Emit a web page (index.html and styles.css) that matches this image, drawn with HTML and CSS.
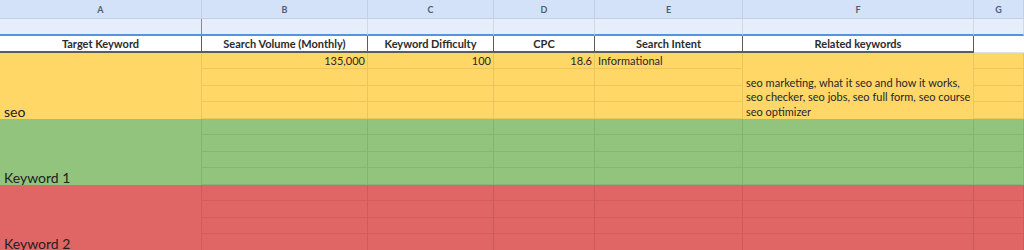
FILE: index.html
```html
<!DOCTYPE html>
<html>
<head>
<meta charset="utf-8">
<link rel="stylesheet" href="styles.css">
</head>
<body>
<div class="sheet">
  <div class="col">A</div><div class="col">B</div><div class="col">C</div><div class="col">D</div><div class="col">E</div><div class="col">F</div><div class="col">G</div>

  <div class="sel sel-a"></div><div class="sel sel-b"></div><div class="sel"></div><div class="sel"></div><div class="sel"></div><div class="sel"></div><div class="sel"></div>

  <div class="hd">Target Keyword</div><div class="hd">Search Volume (Monthly)</div><div class="hd">Keyword Difficulty</div><div class="hd">CPC</div><div class="hd">Search Intent</div><div class="hd">Related keywords</div><div class="hd hd-g"></div>

  <div class="c y kw">seo</div><div class="c y num">135,000</div><div class="c y num">100</div><div class="c y num">18.6</div><div class="c y txt">Informational</div>
  <div class="c y rel"><span>seo marketing, what it seo and how it works,</span><span>seo checker, seo jobs, seo full form, seo course</span><span>seo optimizer</span></div><div class="c y"></div>
  <div class="c y"></div><div class="c y"></div><div class="c y"></div><div class="c y"></div><div class="c y"></div>
  <div class="c y"></div><div class="c y"></div><div class="c y"></div><div class="c y"></div><div class="c y"></div>
  <div class="c y"></div><div class="c y"></div><div class="c y"></div><div class="c y"></div><div class="c y"></div>

  <div class="c g kw">Keyword 1</div><div class="c g"></div><div class="c g"></div><div class="c g"></div><div class="c g"></div><div class="c g"></div><div class="c g"></div>
  <div class="c g"></div><div class="c g"></div><div class="c g"></div><div class="c g"></div><div class="c g"></div><div class="c g"></div>
  <div class="c g"></div><div class="c g"></div><div class="c g"></div><div class="c g"></div><div class="c g"></div><div class="c g"></div>
  <div class="c g"></div><div class="c g"></div><div class="c g"></div><div class="c g"></div><div class="c g"></div><div class="c g"></div>

  <div class="c r kw">Keyword 2</div><div class="c r"></div><div class="c r"></div><div class="c r"></div><div class="c r"></div><div class="c r"></div><div class="c r"></div>
  <div class="c r"></div><div class="c r"></div><div class="c r"></div><div class="c r"></div><div class="c r"></div><div class="c r"></div>
  <div class="c r"></div><div class="c r"></div><div class="c r"></div><div class="c r"></div><div class="c r"></div><div class="c r"></div>
  <div class="c r"></div><div class="c r"></div><div class="c r"></div><div class="c r"></div><div class="c r"></div><div class="c r"></div>
</div>
</body>
</html>
```

FILE: styles.css
```css
html, body {
  margin: 0;
  padding: 0;
  background: #ffffff;
  overflow: hidden;
}

.sheet {
  display: grid;
  grid-template-columns: 202px 166px 126px 101px 148px 231px 50px;
  grid-template-rows: 19px 17px 17px 16px 17px 16px 17px 16px 17px 16px 17px 16px 17px 16px 17px;
  width: 1024px;
  font-family: Lato, "Liberation Sans", sans-serif;
  color: #262626;
}

.sheet > div {
  box-sizing: border-box;
  min-width: 0;
  overflow: hidden;
  white-space: nowrap;
}

.col {
  background: #d3e2f8;
  border-right: 1px solid #c3cfe2;
  border-bottom: 1px solid #c3cfe2;
  font-size: 9px;
  font-weight: 700;
  color: #4f5d73;
  display: flex;
  align-items: center;
  justify-content: center;
}

.sel {
  background: #e6eefb;
  border-right: 1px solid #cfd9ea;
  border-bottom: 2px solid #5a8fe6;
}

.sel-a {
  border-right: 1px solid #5a8fe6;
}

.hd {
  background: #ffffff;
  border-right: 1px solid #5c5c5c;
  border-bottom: 2px solid #5c5c5c;
  font-size: 11px;
  font-weight: 700;
  color: #2b2b2b;
  display: flex;
  align-items: center;
  justify-content: center;
}

.hd-g {
  border-right: none;
  border-bottom: 1px solid #e2e2e2;
}

.c {
  border-right: 1px solid rgba(0, 0, 0, 0.08);
  border-bottom: 1px solid rgba(0, 0, 0, 0.07);
  font-size: 11px;
  display: flex;
  align-items: center;
}

.y { background: #fed766; }
.g { background: #92c47d; }
.r { background: #e06666; }

.kw {
  grid-row: span 4;
  align-items: flex-end;
  font-size: 14px;
  line-height: 14px;
  padding: 0 0 0 4px;
  border-bottom: none;
  color: #222;
}

.num {
  justify-content: flex-end;
  padding-right: 2px;
}

.txt {
  padding-left: 3px;
}

.rel {
  grid-row: span 4;
  flex-direction: column;
  align-items: flex-start;
  justify-content: flex-end;
  padding: 0 0 0 3px;
  line-height: 14.5px;
  border-bottom: none;
}
```
